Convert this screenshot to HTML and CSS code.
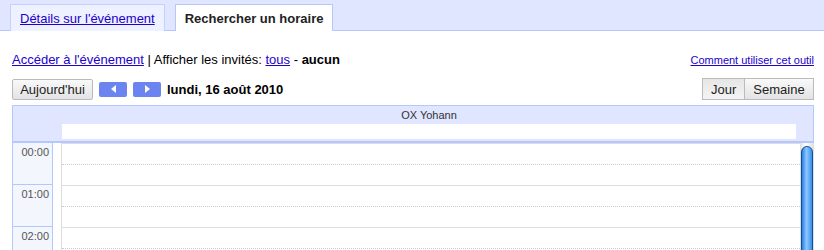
FILE: index.html
```html
<!DOCTYPE html>
<html lang="fr">
<head>
    <meta charset="UTF-8">
    <title>Rechercher un horaire</title>
    <link rel="stylesheet" href="styles.css">
</head>
<body>
    <div class="tabs">
        <div class="tab"><a href="#">Détails sur l'événement</a></div>
        <div class="tab active">Rechercher un horaire</div>
    </div>

    <div class="page">
        <div class="links-row">
            <div class="links">
                <a href="#">Accéder à l'événement</a> | Afficher les invités: <a href="#">tous</a> - <b>aucun</b>
            </div>
            <a class="help" href="#">Comment utiliser cet outil</a>
        </div>

        <div class="toolbar">
            <div class="nav">
                <button class="btn today">Aujourd'hui</button>
                <button class="arrow prev"><span></span></button>
                <button class="arrow next"><span></span></button>
                <span class="date">lundi, 16 août 2010</span>
            </div>
            <div class="views">
                <button class="btn view selected">Jour</button>
                <button class="btn view">Semaine</button>
            </div>
        </div>

        <div class="cal-head">
            <div class="who">OX Yohann</div>
            <div class="allday"></div>
        </div>

        <div class="cal-body">
            <div class="times">
                <div class="hour">00:00</div>
                <div class="hour">01:00</div>
                <div class="hour">02:00</div>
            </div>
            <div class="grid">
                <div class="slot"></div>
                <div class="slot"></div>
                <div class="slot"></div>
            </div>
            <div class="scroll"><div class="thumb"></div></div>
        </div>
    </div>
</body>
</html>
```

FILE: styles.css
```css
* {
    margin: 0;
    padding: 0;
    box-sizing: border-box;
}

body {
    font-family: 'Liberation Sans', Arial, sans-serif;
    font-size: 13px;
    color: #000;
    background: #fff;
    height: 250px;
    overflow: hidden;
}

a {
    color: #2200cc;
}

.tabs {
    display: flex;
    gap: 10px;
    height: 31px;
    padding: 4px 0 0 10px;
    background: #e0e6ff;
    border-bottom: 1px solid #b5c7ff;
}

.tab {
    height: 27px;
    padding: 6px 9px 0;
    background: #eef1ff;
    border: 1px solid #c4d1ff;
    border-bottom: none;
    white-space: nowrap;
}

.tab.active {
    height: 27px;
    padding: 6px 9px 0;
    background: #fff;
    font-weight: bold;
    color: #222;
    border-color: #b5c7ff;
}

.page {
    padding: 0 10px 0 12px;
}

.links-row {
    display: flex;
    justify-content: space-between;
    align-items: baseline;
    margin-top: 21px;
    line-height: 16px;
}

.help {
    font-size: 11px;
}

.toolbar {
    display: flex;
    justify-content: space-between;
    align-items: center;
    margin-top: 10px;
    height: 22px;
}

.nav {
    display: flex;
    align-items: center;
}

.btn {
    font-family: inherit;
    font-size: 13px;
    color: #222;
    height: 21px;
    border: 1px solid #bbb;
    border-radius: 2px;
    background: linear-gradient(#f9f9f9, #e3e3e3);
    cursor: pointer;
}

.today {
    width: 81px;
}

.arrow {
    width: 28px;
    height: 15px;
    margin-left: 6px;
    border: none;
    border-radius: 2px;
    background: #6b84f0;
    display: flex;
    align-items: center;
    justify-content: center;
}

.arrow span {
    width: 0;
    height: 0;
    border-top: 4px solid transparent;
    border-bottom: 4px solid transparent;
}

.prev span {
    border-right: 5px solid #fff;
}

.next span {
    border-left: 5px solid #fff;
}

.date {
    font-weight: bold;
    margin-left: 6px;
}

.views {
    display: flex;
}

.view {
    height: 22px;
    border-radius: 0;
    padding: 0 8px;
}

.view.selected {
    width: 42px;
    background: linear-gradient(#e6e6e6, #f4f4f4);
    border-right: none;
}

.view:last-child {
    width: 70px;
}

.cal-head {
    margin-top: 5px;
    height: 38px;
    background: #e0e6ff;
    border: 1px solid #b5c7ff;
    border-bottom-width: 2px;
    padding: 3px 17px 0 49px;
}

.who {
    text-align: center;
    font-size: 11px;
    color: #333;
    line-height: 13px;
}

.allday {
    margin-top: 2px;
    height: 15px;
    background: #fff;
}

.cal-body {
    display: flex;
    height: 110px;
}

.times {
    width: 41px;
    background: #f3f6fd;
    border-left: 1px solid #b5c7ff;
    border-right: 1px solid #b5c7ff;
}

.hour {
    height: 42px;
    text-align: right;
    padding: 3px 3px 0 0;
    font-size: 11px;
    color: #555;
    border-bottom: 1px solid #b5c7ff;
}

.grid {
    flex: 1;
    margin-left: 8px;
    border-left: 1px solid #ddd;
    border-top: 1px solid #ddd;
}

.slot {
    height: 42px;
    border-bottom: 1px solid #ddd;
    position: relative;
}

.slot::after {
    content: '';
    position: absolute;
    left: 0;
    right: 0;
    top: 20px;
    border-top: 1px dotted #ccc;
}

.scroll {
    width: 14px;
    background: linear-gradient(90deg, #ddd, #fff 40%, #ddd);
    padding: 3px 1px 0;
}

.thumb {
    height: 120px;
    border-radius: 6px 6px 0 0;
    border: 1px solid #0b4fa8;
    background: linear-gradient(90deg, #2c7fe0, #8cc8ff 45%, #3a8ee8);
}
```
